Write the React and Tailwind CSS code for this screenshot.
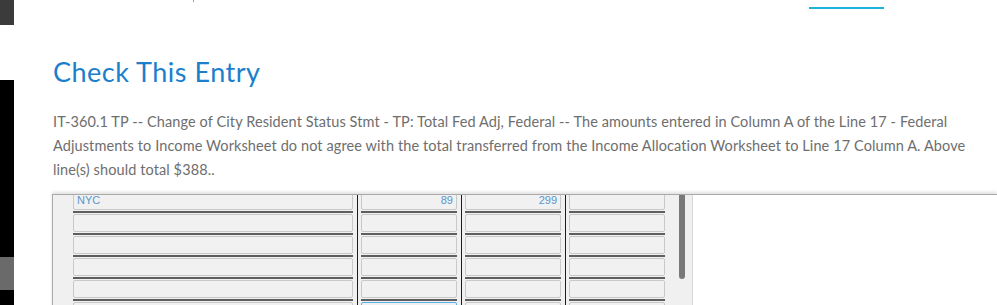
import React from 'react';

const rows = [
  ['NYC', '89', '299', ''],
  ['', '', '', ''],
  ['', '', '', ''],
  ['', '', '', ''],
  ['', '', '', ''],
  ['', '', '', ''],
];

function Cell({ value, right, focused }) {
  return (
    <div className="flex flex-col">
      <div
        className={
          'h-[18px] rounded-[2px] border bg-[#f1f1f1] px-[3px] text-[11px] leading-[15px] text-[#5b95cc] ' +
          (focused ? 'border-[#5aaee6] ' : 'border-[#c9c9c9] ') +
          (right ? 'text-right' : 'text-left')
        }
      >
        {value}
      </div>
      <div className="mt-[1px] h-[2px] bg-[#5e5e5e]" />
      <div className="h-[1px]" />
    </div>
  );
}

function Column({ index, width }) {
  return (
    <div className="flex flex-col" style={{ width }}>
      {rows.map((r, i) => (
        <Cell key={i} value={r[index]} right={index > 0} focused={index === 1 && i === 5} />
      ))}
    </div>
  );
}

function Divider() {
  return <div className="ml-[4px] mr-[3px] w-[1px] self-stretch bg-[#1c1c1c]" />;
}

export default function App() {
  return (
    <div className="flex h-[305px] w-[997px] overflow-hidden bg-white" style={{ fontFamily: 'Lato, "Noto Sans", sans-serif' }}>
      {/* left strip */}
      <div className="flex w-[14px] shrink-0 flex-col">
        <div className="h-[25px] bg-[#3b3b3b]" />
        <div className="h-[55px] bg-white" />
        <div className="h-[177px] bg-black" />
        <div className="h-[33px] bg-[#6a6a6a]" />
        <div className="flex-1 bg-black" />
      </div>

      <div className="flex min-w-0 flex-1 flex-col pl-[39px]">
        {/* top bar */}
        <div className="flex h-[56px] shrink-0">
          <div className="ml-[140px] h-[2px] w-[1px] bg-[#9a9a9a]" />
          <div className="ml-[615px] mt-[7px] h-[2px] w-[75px] bg-[#1fb3d8]" />
        </div>

        <h1 className="text-[27px] leading-[32px] tracking-[0.5px] text-[#1b7fcc]">Check This Entry</h1>

        <p className="mt-[22px] text-[14.5px] leading-[24px] tracking-[0.1px] text-[#6e6e6e]">
          IT-360.1 TP -- Change of City Resident Status Stmt - TP: Total Fed Adj, Federal -- The amounts entered in Column A of the Line 17 - Federal
          <br />
          Adjustments to Income Worksheet do not agree with the total transferred from the Income Allocation Worksheet to Line 17 Column A. Above
          <br />
          line(s) should total $388..
        </p>

        {/* grid panel */}
        <div className="-ml-[1px] mt-[12px] flex flex-1 border-l border-t border-[#a9a9a9] shadow-[0_-2px_3px_rgba(0,0,0,0.12)]">
          <div className="flex w-[640px] shrink-0 overflow-hidden border-r border-[#d6d6d6] bg-[#f0f0f0]">
            <div className="-mt-[3px] flex pl-[20px]" style={{ fontFamily: '"Liberation Sans", Arial, sans-serif' }}>
              <Column index={0} width={280} />
              <Divider />
              <Column index={1} width={96} />
              <Divider />
              <Column index={2} width={96} />
              <Divider />
              <Column index={3} width={96} />
            </div>
            <div className="ml-[14px] h-[84px] w-[6px] rounded-b-full bg-[#797979]" />
          </div>
          <div className="flex-1 bg-white" />
        </div>
      </div>
    </div>
  );
}
